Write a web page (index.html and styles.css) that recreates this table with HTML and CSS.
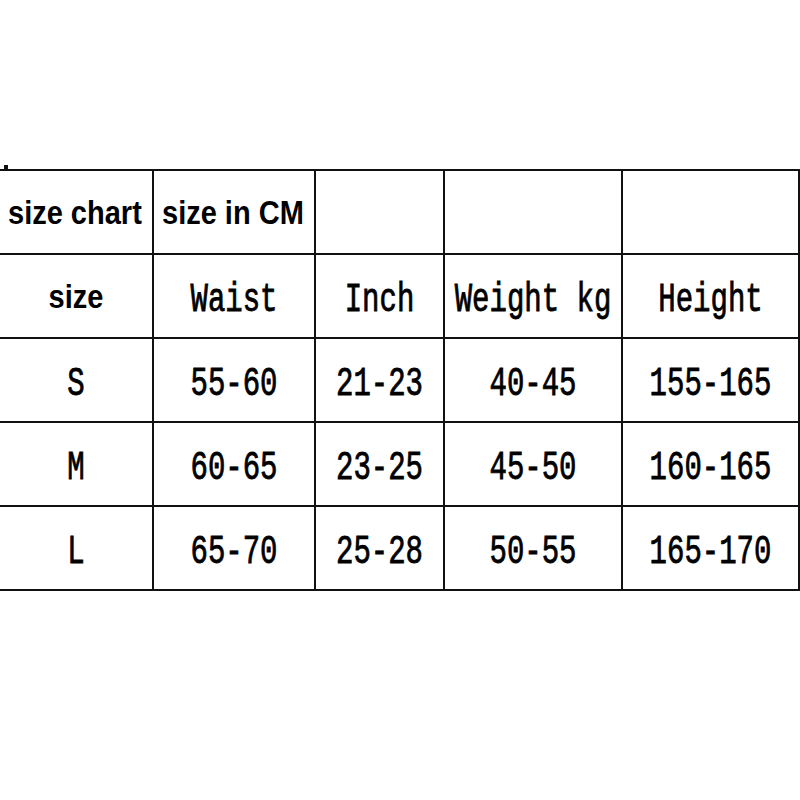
FILE: index.html
```html
<!DOCTYPE html>
<html>
<head>
<meta charset="utf-8">
<link rel="stylesheet" href="styles.css">
</head>
<body>
<div class="page">
  <div class="mark"></div>
  <div class="chart">
    <div class="cell head"><span class="sans">size chart</span></div>
    <div class="cell head"><span class="sans">size in CM</span></div>
    <div class="cell"></div>
    <div class="cell"></div>
    <div class="cell"></div>

    <div class="cell"><span class="sans">size</span></div>
    <div class="cell"><span class="mono">Waist</span></div>
    <div class="cell"><span class="mono">Inch</span></div>
    <div class="cell"><span class="mono">Weight kg</span></div>
    <div class="cell"><span class="mono">Height</span></div>

    <div class="cell"><span class="mono">S</span></div>
    <div class="cell"><span class="mono">55-60</span></div>
    <div class="cell"><span class="mono">21-23</span></div>
    <div class="cell"><span class="mono">40-45</span></div>
    <div class="cell"><span class="mono">155-165</span></div>

    <div class="cell"><span class="mono">M</span></div>
    <div class="cell"><span class="mono">60-65</span></div>
    <div class="cell"><span class="mono">23-25</span></div>
    <div class="cell"><span class="mono">45-50</span></div>
    <div class="cell"><span class="mono">160-165</span></div>

    <div class="cell"><span class="mono">L</span></div>
    <div class="cell"><span class="mono">65-70</span></div>
    <div class="cell"><span class="mono">25-28</span></div>
    <div class="cell"><span class="mono">50-55</span></div>
    <div class="cell"><span class="mono">165-170</span></div>
  </div>
</div>
</body>
</html>
```
FILE: styles.css
```css
html, body {
  margin: 0;
  padding: 0;
  background: #fff;
}

.page {
  width: 800px;
  height: 800px;
  padding-top: 169px;
  box-sizing: border-box;
  position: relative;
}

.mark {
  position: absolute;
  left: 4px;
  top: 165px;
  width: 4px;
  height: 4px;
  background: #111;
}

.chart {
  display: grid;
  grid-template-columns: 152px 160px 127px 176px 175px;
  grid-template-rows: repeat(5, 82px);
  gap: 2px;
  padding: 2px 2px 2px 0;
  background: #111;
  width: 800px;
  box-sizing: border-box;
}

.cell {
  background: #fff;
  display: flex;
  align-items: center;
  justify-content: center;
  overflow: hidden;
}

.cell.head {
  justify-content: flex-start;
  padding-left: 8px;
}

.sans {
  display: inline-block;
  font-family: "Liberation Sans", Arial, sans-serif;
  font-weight: bold;
  font-size: 29px;
  color: #000;
  transform: translateY(1px) scaleY(1.15);
  white-space: nowrap;
}

.mono {
  display: inline-block;
  font-family: "Liberation Mono", "Courier New", monospace;
  font-weight: normal;
  -webkit-text-stroke: 0.6px #000;
  font-size: 29px;
  color: #000;
  transform: translateY(4px) scaleY(1.4);
  white-space: pre;
}
```
